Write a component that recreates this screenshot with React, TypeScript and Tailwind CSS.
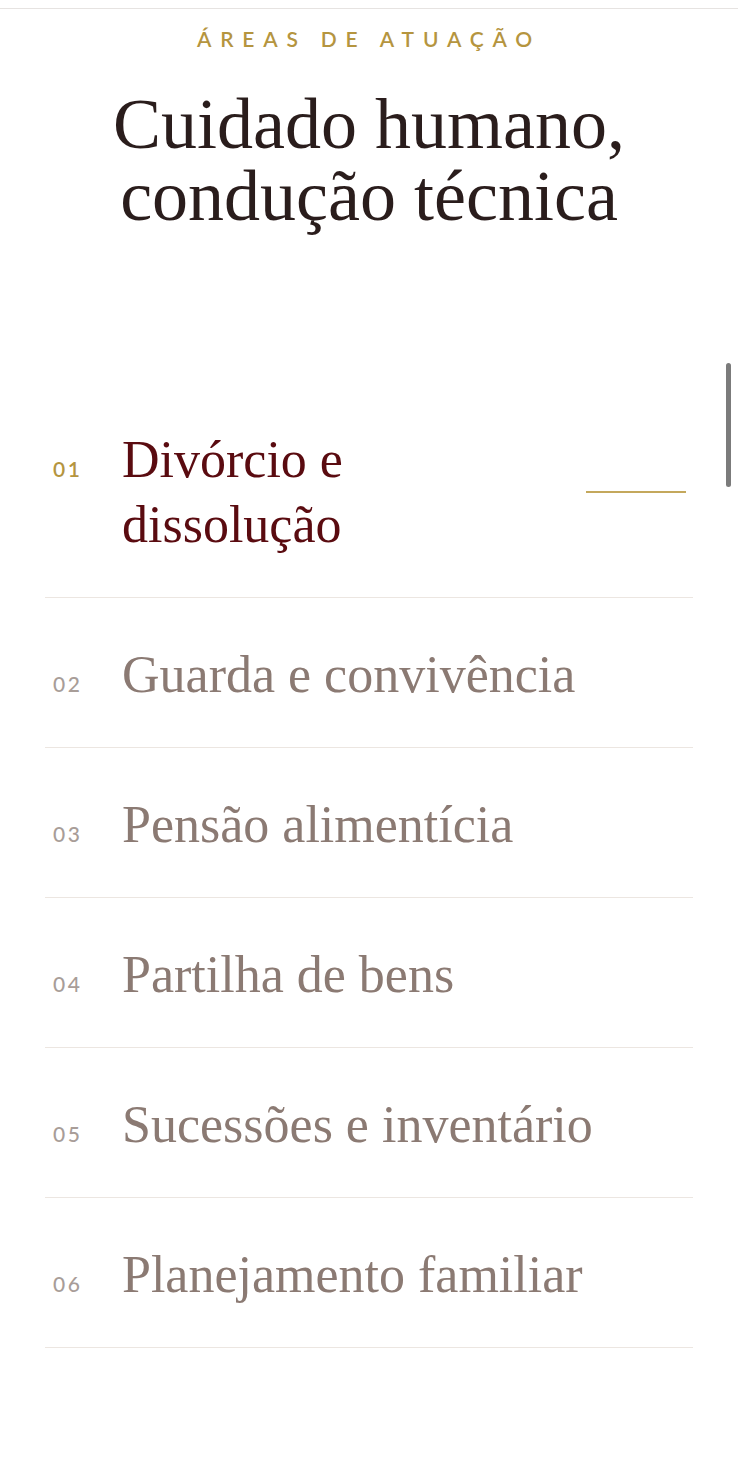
import React from 'react';

interface Area {
  num: string;
  title: string;
}

const areas: Area[] = [
  { num: '01', title: 'Divórcio e dissolução' },
  { num: '02', title: 'Guarda e convivência' },
  { num: '03', title: 'Pensão alimentícia' },
  { num: '04', title: 'Partilha de bens' },
  { num: '05', title: 'Sucessões e inventário' },
  { num: '06', title: 'Planejamento familiar' },
];

export default function App() {
  const active = 0;

  return (
    <div className="relative min-h-[1460px] bg-white">
      <div className="h-[9px] border-b border-[#e6e3e1]" />

      <section className="px-[45px]">
        <p className="pt-[17px] text-center text-[21px] leading-[25px] tracking-[0.42em] text-[#b5953f] font-['Lato','Liberation_Sans',sans-serif] font-semibold">
          ÁREAS DE ATUAÇÃO
        </p>

        <h2 className="mt-[37px] text-center text-[72px] leading-[72px] text-[#2a1d1c] font-['Liberation_Serif',serif]">
          Cuidado humano,
          <br />
          condução técnica
        </h2>

        <ul className="mt-[151px]">
          {areas.map((area, index) => {
            const isActive = index === active;
            return (
              <li
                key={area.num}
                className="flex items-center gap-6 border-b border-[#ece6e1] pl-2 pr-[7px] pt-[44px] pb-[40px]"
              >
                <div className="flex flex-1 items-baseline">
                  <span
                    className={`w-[69px] shrink-0 text-[21px] tracking-[0.12em] font-['Lato','Liberation_Sans',sans-serif] ${
                      isActive ? 'text-[#b5953f] font-semibold' : 'text-[#a89d98] font-medium'
                    }`}
                  >
                    {area.num}
                  </span>
                  <span
                    className={`text-[52px] leading-[65px] font-['Liberation_Serif',serif] ${
                      isActive ? 'text-[#5a0b10]' : 'text-[#8b7a73]'
                    }`}
                  >
                    {area.title}
                  </span>
                </div>
                {isActive && <div className="h-[2px] w-[100px] shrink-0 bg-[#c4a85c]" />}
              </li>
            );
          })}
        </ul>
      </section>

      {/* overlay scrollbar from the capture */}
      <div className="absolute left-[726px] top-[363px] h-[124px] w-[5px] rounded-full bg-[#7b7b7b]" />
    </div>
  );
}
